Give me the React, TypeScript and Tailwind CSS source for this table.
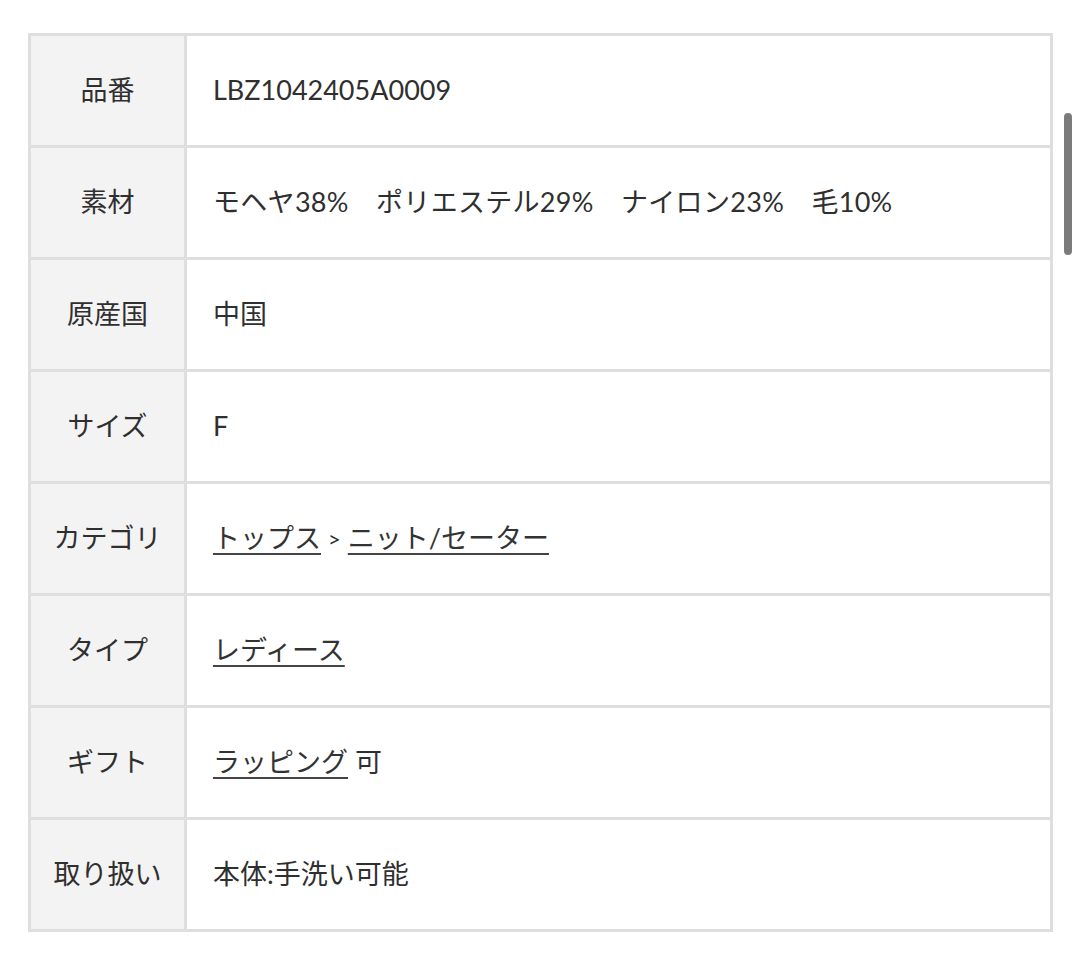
import React from "react";

type Row = { label: string; value: React.ReactNode };

const Link = ({ children }: { children: React.ReactNode }) => (
  <a className="underline decoration-[2px] underline-offset-[5px] decoration-[#444] text-[#333]">
    {children}
  </a>
);

const rows: Row[] = [
  { label: "品番", value: "LBZ1042405A0009" },
  {
    label: "素材",
    value: (
      <span className="tracking-[0.3px]">
        モヘヤ38%　ポリエステル29%　ナイロン23%　毛10%
      </span>
    ),
  },
  { label: "原産国", value: "中国" },
  { label: "サイズ", value: "F" },
  {
    label: "カテゴリ",
    value: (
      <>
        <Link>トップス</Link>
        <span className="mx-[7px] text-[22px]">&gt;</span>
        <Link>ニット/セーター</Link>
      </>
    ),
  },
  { label: "タイプ", value: <Link>レディース</Link> },
  {
    label: "ギフト",
    value: (
      <>
        <Link>ラッピング</Link>
        <span className="ml-[7px]">可</span>
      </>
    ),
  },
  { label: "取り扱い", value: "本体:手洗い可能" },
];

export default function App() {
  return (
    <div
      className="relative w-[1080px] h-[959px] bg-white text-[#2f2f2f] text-[27px]"
      style={{ fontFamily: "Lato, 'Noto Sans CJK JP', sans-serif" }}
    >
      <div className="pt-[33px] pl-[28px]">
        <div className="w-[1025px] border-[3px] border-[#dedede]">
          {rows.map((r, i) => (
            <div
              key={r.label}
              className={`flex ${i > 0 ? "h-[112px] border-t-[3px] border-[#dedede]" : "h-[109px]"}`}
            >
              <div className="w-[156px] shrink-0 bg-[#f3f3f3] border-r-[3px] border-[#dedede] flex items-center justify-center">
                {r.label}
              </div>
              <div className="flex-1 flex items-center pl-[26px]">{r.value}</div>
            </div>
          ))}
        </div>
      </div>
      <div className="absolute left-[1064px] top-[113px] w-[8px] h-[142px] rounded-full bg-[#7b7b7b]" />
    </div>
  );
}
